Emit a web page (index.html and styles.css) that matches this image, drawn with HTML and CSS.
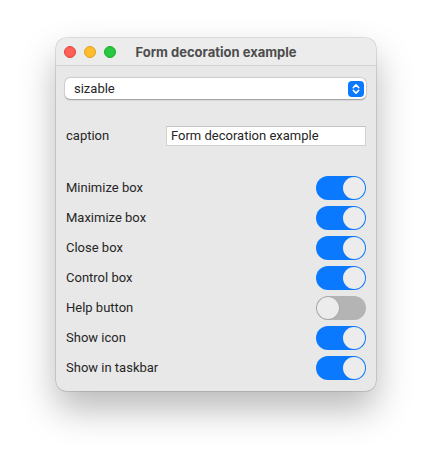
FILE: index.html
```html
<!DOCTYPE html>
<html>
<head>
<meta charset="utf-8">
<link rel="stylesheet" href="styles.css">
</head>
<body>
<div class="window">
  <div class="titlebar">
    <div class="lights">
      <span class="light red"></span>
      <span class="light yellow"></span>
      <span class="light green"></span>
    </div>
    <div class="title">Form decoration example</div>
  </div>
  <div class="content">
    <div class="select">
      <span class="select-text">sizable</span>
      <span class="select-btn">
        <svg width="16" height="16" viewBox="0 0 16 16"><path d="M5.3 6.6 L8 3.9 L10.7 6.6 M5.3 9.4 L8 12.1 L10.7 9.4" fill="none" stroke="#fff" stroke-width="1.5" stroke-linecap="round" stroke-linejoin="round"/></svg>
      </span>
    </div>
    <div class="caption-row">
      <span class="label">caption</span>
      <div class="input">Form decoration example</div>
    </div>
    <div class="toggles">
      <div class="row"><span class="label">Minimize box</span><span class="toggle on"><span class="knob"></span></span></div>
      <div class="row"><span class="label">Maximize box</span><span class="toggle on"><span class="knob"></span></span></div>
      <div class="row"><span class="label">Close box</span><span class="toggle on"><span class="knob"></span></span></div>
      <div class="row"><span class="label">Control box</span><span class="toggle on"><span class="knob"></span></span></div>
      <div class="row"><span class="label">Help button</span><span class="toggle off"><span class="knob"></span></span></div>
      <div class="row"><span class="label">Show icon</span><span class="toggle on"><span class="knob"></span></span></div>
      <div class="row"><span class="label">Show in taskbar</span><span class="toggle on"><span class="knob"></span></span></div>
    </div>
  </div>
</div>
</body>
</html>
```

FILE: styles.css
```css
html, body {
  margin: 0;
  padding: 0;
  background: #ffffff;
}
html {
  height: 465px;
}
body {
  height: 465px;
  box-sizing: border-box;
  font-family: Roboto, "Liberation Sans", sans-serif;
  font-size: 13px;
  color: #262626;
  padding: 38px 0 0 56px;
}
.window {
  width: 320px;
  height: 353px;
  box-sizing: border-box;
  background: #e8e8e8;
  border-radius: 10px;
  overflow: hidden;
  box-shadow: 0 0 0 0.5px rgba(0,0,0,0.22), 0 18px 36px rgba(0,0,0,0.28);
}
.titlebar {
  height: 28px;
  box-sizing: border-box;
  background: #ececec;
  border-bottom: 1px solid #d2d2d2;
  display: flex;
  align-items: center;
  padding-left: 8px;
  position: relative;
}
.lights {
  display: flex;
  gap: 8px;
}
.light {
  width: 12px;
  height: 12px;
  border-radius: 50%;
  box-sizing: border-box;
}
.red { background: #fe5f57; border: 0.5px solid #e0443e; }
.yellow { background: #febc2e; border: 0.5px solid #dea123; }
.green { background: #28c840; border: 0.5px solid #1aab29; }
.title {
  position: absolute;
  left: 0;
  right: 0;
  text-align: center;
  font-family: Inter, "Liberation Sans", sans-serif;
  font-weight: 700;
  color: #4d4d4d;
  font-size: 13px;
}
.content {
  padding: 12px 10px 11px 9px;
}
.select {
  height: 21px;
  background: #ffffff;
  border-radius: 5px;
  box-shadow: 0 0 0 0.5px rgba(0,0,0,0.12), 0 0.5px 1.5px rgba(0,0,0,0.3);
  display: flex;
  align-items: center;
  justify-content: space-between;
  padding: 0 2px 0 9px;
}
.select-text {
  font-size: 13px;
  color: #262626;
}
.select-btn {
  width: 16px;
  height: 16px;
  border-radius: 4px;
  background: #0b79fe;
  display: flex;
}
.caption-row {
  margin-top: 27px;
  height: 20px;
  display: flex;
  align-items: center;
  justify-content: space-between;
  padding-left: 1px;
}
.input {
  width: 200px;
  height: 20px;
  box-sizing: border-box;
  background: #ffffff;
  border: 1px solid #d0d0d0;
  border-top-color: #c4c4c4;
  padding-left: 4px;
  line-height: 18px;
  color: #262626;
}
.toggles {
  margin-top: 30px;
  display: flex;
  flex-direction: column;
  gap: 6px;
}
.row {
  height: 24px;
  display: flex;
  align-items: center;
  justify-content: space-between;
  padding-left: 1px;
}
.label {
  line-height: 16px;
  margin-top: -1px;
}
.toggle {
  width: 50px;
  height: 24px;
  border-radius: 12px;
  box-sizing: border-box;
  display: flex;
  align-items: center;
  padding: 1px;
}
.toggle.on {
  background: #0b79fe;
  justify-content: flex-end;
}
.toggle.off {
  background: #b4b4b4;
  justify-content: flex-start;
}
.knob {
  width: 22px;
  height: 22px;
  border-radius: 50%;
  background: #ececec;
}
.toggle.off .knob {
  box-shadow: 0 0 0 0.5px rgba(0,0,0,0.15);
}
```
